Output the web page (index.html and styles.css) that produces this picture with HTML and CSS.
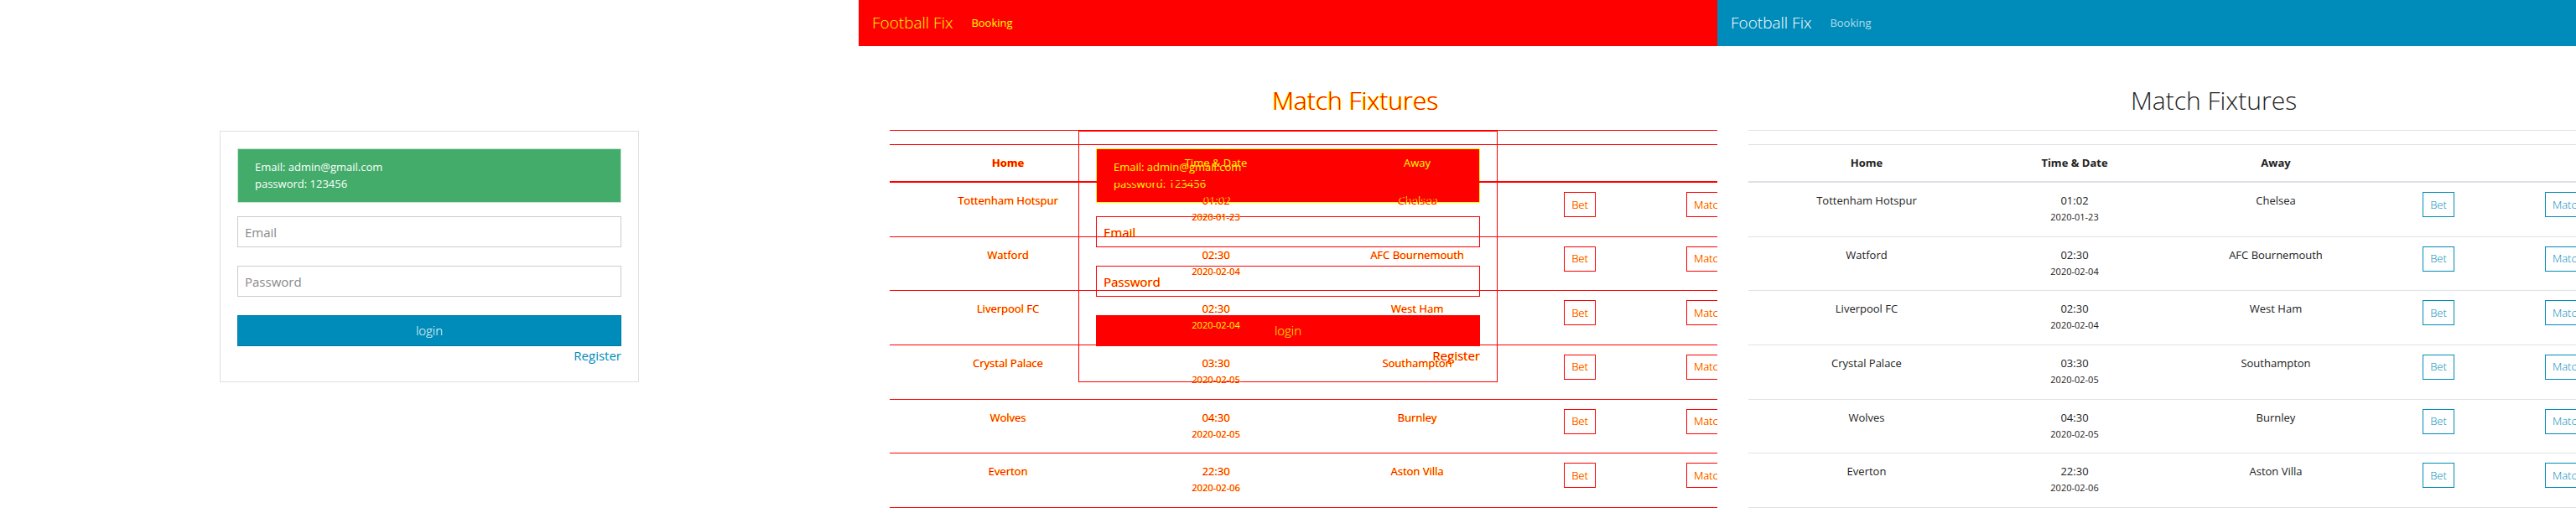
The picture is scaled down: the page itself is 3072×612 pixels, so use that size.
FILE: index.html
```html
<!DOCTYPE html>
<html lang="en">
<head>
<meta charset="utf-8">
<title>Football Fix</title>
<link rel="stylesheet" href="styles.css">
</head>
<body>
<div class="board">

  <section class="panel">
    <div class="login">
      <form class="card">
        <div class="alert">Email: admin@gmail.com<br>password: 123456</div>
        <input class="field" type="email" placeholder="Email" aria-label="Email">
        <input class="field" type="password" placeholder="Password" aria-label="Password">
        <button class="submit" type="button">login</button>
        <a class="register" href="#register">Register</a>
      </form>
    </div>
  </section>

  <section class="panel diff">
    <div class="login">
      <form class="card">
        <div class="alert">Email: admin@gmail.com<br>password: 123456</div>
        <input class="field" type="email" placeholder="Email" aria-label="Email">
        <input class="field" type="password" placeholder="Password" aria-label="Password">
        <button class="submit" type="button">login</button>
        <a class="register" href="#register">Register</a>
      </form>
    </div>
    <div class="fixtures">
      <nav class="navbar"><a class="brand" href="#home">Football Fix</a><a class="navlink" href="#booking">Booking</a></nav>
      <main class="content">
        <h2 class="title">Match Fixtures</h2>
        <hr class="rule">
        <table class="matches">
          <colgroup><col class="c-home"><col class="c-time"><col class="c-away"><col class="c-bet"><col class="c-match"></colgroup>
          <thead><tr><th>Home</th><th class="over">Time &amp; Date</th><th class="over">Away</th><th></th><th></th></tr></thead>
          <tbody>
            <tr><td>Tottenham Hotspur</td><td>01:02<div class="date">2020-01-23</div></td><td>Chelsea</td><td><button class="btn" type="button">Bet</button></td><td class="last"><button class="btn" type="button">Match</button></td></tr>
            <tr><td>Watford</td><td>02:30<div class="date">2020-02-04</div></td><td>AFC Bournemouth</td><td><button class="btn" type="button">Bet</button></td><td class="last"><button class="btn" type="button">Match</button></td></tr>
            <tr><td>Liverpool FC</td><td>02:30<div class="date over">2020-02-04</div></td><td>West Ham</td><td><button class="btn" type="button">Bet</button></td><td class="last"><button class="btn" type="button">Match</button></td></tr>
            <tr><td>Crystal Palace</td><td>03:30<div class="date">2020-02-05</div></td><td>Southampton</td><td><button class="btn" type="button">Bet</button></td><td class="last"><button class="btn" type="button">Match</button></td></tr>
            <tr><td>Wolves</td><td>04:30<div class="date">2020-02-05</div></td><td>Burnley</td><td><button class="btn" type="button">Bet</button></td><td class="last"><button class="btn" type="button">Match</button></td></tr>
            <tr><td>Everton</td><td>22:30<div class="date">2020-02-06</div></td><td>Aston Villa</td><td><button class="btn" type="button">Bet</button></td><td class="last"><button class="btn" type="button">Match</button></td></tr>
          </tbody>
        </table>
      </main>
    </div>
  </section>

  <section class="panel">
    <div class="fixtures">
      <nav class="navbar"><a class="brand" href="#home">Football Fix</a><a class="navlink" href="#booking">Booking</a></nav>
      <main class="content">
        <h2 class="title">Match Fixtures</h2>
        <hr class="rule">
        <table class="matches">
          <colgroup><col class="c-home"><col class="c-time"><col class="c-away"><col class="c-bet"><col class="c-match"></colgroup>
          <thead><tr><th>Home</th><th>Time &amp; Date</th><th>Away</th><th></th><th></th></tr></thead>
          <tbody>
            <tr><td>Tottenham Hotspur</td><td>01:02<div class="date">2020-01-23</div></td><td>Chelsea</td><td><button class="btn" type="button">Bet</button></td><td class="last"><button class="btn" type="button">Match</button></td></tr>
            <tr><td>Watford</td><td>02:30<div class="date">2020-02-04</div></td><td>AFC Bournemouth</td><td><button class="btn" type="button">Bet</button></td><td class="last"><button class="btn" type="button">Match</button></td></tr>
            <tr><td>Liverpool FC</td><td>02:30<div class="date">2020-02-04</div></td><td>West Ham</td><td><button class="btn" type="button">Bet</button></td><td class="last"><button class="btn" type="button">Match</button></td></tr>
            <tr><td>Crystal Palace</td><td>03:30<div class="date">2020-02-05</div></td><td>Southampton</td><td><button class="btn" type="button">Bet</button></td><td class="last"><button class="btn" type="button">Match</button></td></tr>
            <tr><td>Wolves</td><td>04:30<div class="date">2020-02-05</div></td><td>Burnley</td><td><button class="btn" type="button">Bet</button></td><td class="last"><button class="btn" type="button">Match</button></td></tr>
            <tr><td>Everton</td><td>22:30<div class="date">2020-02-06</div></td><td>Aston Villa</td><td><button class="btn" type="button">Bet</button></td><td class="last"><button class="btn" type="button">Match</button></td></tr>
          </tbody>
        </table>
      </main>
    </div>
  </section>

</div>
</body>
</html>
```
FILE: styles.css
```css
* { box-sizing: border-box; }

body {
  margin: 0;
  background: #fff;
  color: #222;
  font-family: "Open Sans", "Noto Sans", sans-serif;
  font-size: 15px;
  line-height: 22px;
}

a { text-decoration: none; }

button, input { font-family: inherit; border-radius: 0; }

.board {
  display: grid;
  grid-template-columns: repeat(3, minmax(0, 1fr));
  min-height: 100vh;
}

/* Layers of one panel share the same grid cell */
.panel {
  display: grid;
  grid-template-columns: minmax(0, 1fr);
  overflow: hidden;
}

.login, .fixtures { grid-area: 1 / 1; }

/* Login */
.login {
  display: flex;
  align-items: center;
  justify-content: center;
}

.card {
  display: flex;
  flex-direction: column;
  gap: 22px;
  width: 500px;
  padding: 20px;
  border: 1px solid #dfdfdf;
}

.alert {
  margin-bottom: -6px;
  padding: 11px 20px 12px;
  border: 1px solid #c7e6d3;
  background: #43ac6a;
  color: #fff;
  font-size: 13px;
  line-height: 20px;
}

.field {
  height: 37px;
  padding: 0 8px;
  border: 1px solid #ccc;
  background: transparent;
  color: #222;
  font-size: 15px;
}

.field::placeholder { color: #888; opacity: 1; }

.submit {
  height: 37px;
  padding: 0 0 2px;
  border: 1px solid #0079a1;
  background: #008cba;
  color: #fff;
  font-size: 15px;
  font-weight: 300;
}

.register {
  align-self: flex-end;
  margin-top: -22px;
  color: #008cba;
}

/* Fixtures */
.navbar {
  display: flex;
  align-items: center;
  gap: 22px;
  height: 55px;
  padding: 0 16px 2px;
  background: #008cba;
}

.brand { color: #fff; font-size: 19px; font-weight: 300; }

.navlink { color: rgba(255, 255, 255, 0.7); font-size: 13px; }

.content {
  width: 1110px;
  margin-left: 37px;
  padding-top: 44px;
}

.title {
  margin: 0;
  font-size: 30px;
  font-weight: 300;
  line-height: 42px;
  text-align: center;
}

.rule {
  margin: 14px 0 16px;
  border: 0;
  border-top: 1px solid #dee2e6;
}

.matches {
  width: 100%;
  height: 434px;
  border-collapse: separate;
  border-spacing: 0;
  table-layout: fixed;
  font-size: 13px;
  line-height: 20px;
  text-align: center;
}

.c-home { width: 282px; }
.c-time { width: 214px; }
.c-away { width: 266px; }
.c-bet { width: 122px; }
.c-match { width: 226px; }

.matches th {
  height: 46px;
  padding: 0 0 2px;
  border-top: 1px solid #dee2e6;
  border-bottom: 2px solid #dee2e6;
  font-weight: 700;
}

.matches td {
  padding: 11px 0;
  border-bottom: 1px solid #dee2e6;
  vertical-align: top;
}

.matches .last { padding-left: 66px; text-align: left; }

.date { font-size: 11px; }

.btn {
  display: inline-block;
  height: 30px;
  padding: 0 8px 1px;
  border: 1px solid #008cba;
  background: transparent;
  color: #008cba;
  font-size: 13px;
  font-weight: 300;
  vertical-align: top;
}

/* Pixel difference of the two screens */
.diff,
.diff .field::placeholder,
.diff .register,
.diff .btn {
  color: #f00;
  text-shadow: 1px 0 #ff0;
}

.diff .title { text-shadow: -1px 0 #ff0, 1px 0 #ff0; }

.diff .card,
.diff .field,
.diff .rule,
.diff th,
.diff td,
.diff .btn { border-color: #f00; }

.diff .navbar,
.diff .submit,
.diff .alert { background: #f00; text-shadow: none; }

.diff .alert { border-color: #ff0; color: #ff0; }

.diff .submit { border-color: #f00; color: #ff0; }

.diff .brand,
.diff .navlink,
.diff .over { color: #ff0; text-shadow: none; }

.diff .over { font-weight: 400; }
```
